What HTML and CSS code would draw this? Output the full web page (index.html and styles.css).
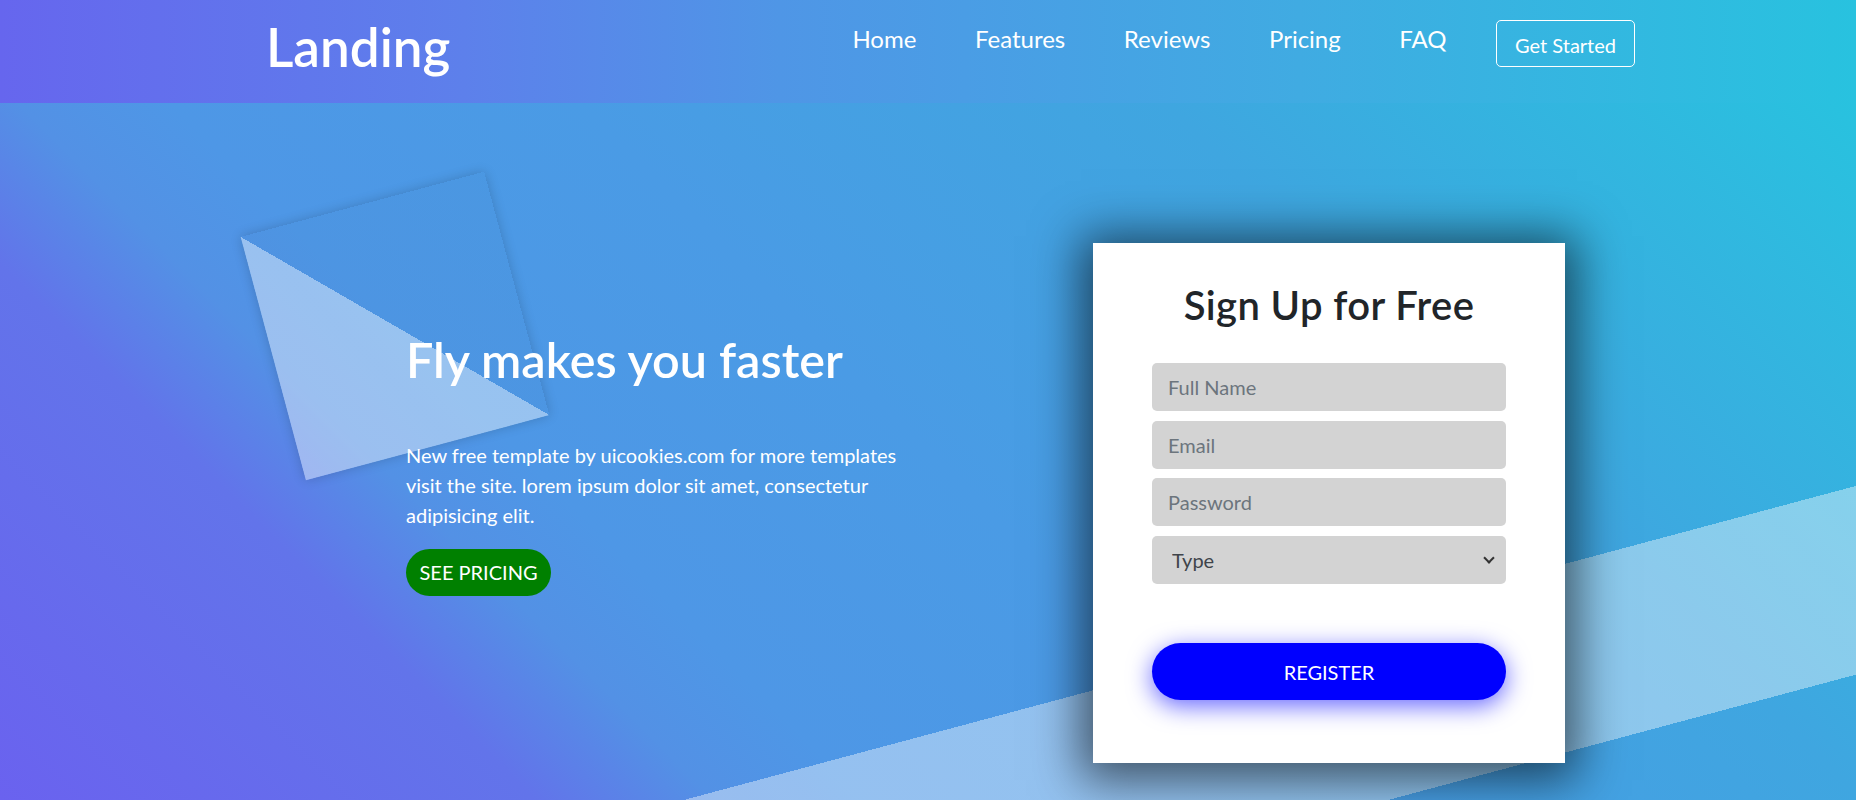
FILE: index.html
```html
<!DOCTYPE html>
<html lang="en">
<head>
<meta charset="utf-8">
<title>Landing</title>
<link rel="stylesheet" href="styles.css">
</head>
<body>
<header class="nav">
  <a class="brand" href="#">Landing</a>
  <ul class="menu">
    <li><a href="#">Home</a></li>
    <li><a href="#">Features</a></li>
    <li><a href="#">Reviews</a></li>
    <li><a href="#">Pricing</a></li>
    <li><a href="#">FAQ</a></li>
  </ul>
  <a class="btn-outline" href="#">Get Started</a>
</header>
<section class="hero">
  <div class="hero-text">
    <div class="tilt"></div>
    <h1>Fly makes you faster</h1>
    <p>New free template by uicookies.com for more templates visit the site. lorem ipsum dolor sit amet, consectetur adipisicing elit.</p>
    <a class="btn-pricing" href="#">SEE PRICING</a>
  </div>
  <form class="signup">
    <h2>Sign Up for Free</h2>
    <div class="fields">
      <input type="text" placeholder="Full Name">
      <input type="email" placeholder="Email">
      <input type="password" placeholder="Password">
      <div class="select-wrap">
        <select>
          <option>Type</option>
          <option>Personal</option>
          <option>Business</option>
        </select>
      </div>
    </div>
    <button type="button" class="btn-register">REGISTER</button>
  </form>
</section>
</body>
</html>
```

FILE: styles.css
```css
* {
  box-sizing: border-box;
}

html, body {
  margin: 0;
  height: 800px;
  overflow: hidden;
}

body {
  font-family: "Lato", "Open Sans", sans-serif;
  color: #fff;
  background: #4a9ae5;
}

a {
  color: #fff;
  text-decoration: none;
}

/* ---------- navbar ---------- */
.nav {
  height: 103px;
  display: flex;
  align-items: flex-start;
  padding: 0 221px 0 266px;
  background: linear-gradient(90deg, #6666ee 0%, #5d80eb 25%, #4f96e6 42%, #4a9de5 52%, #40abe2 70%, #28c2df 100%);
}

.brand {
  font-size: 53px;
  line-height: 53px;
  font-weight: 600;
  margin-top: 20px;
}

.menu {
  list-style: none;
  display: flex;
  margin: 27px 0 0 auto;
  padding: 0;
}

.menu a {
  display: block;
  font-size: 24px;
  line-height: 24px;
  padding: 0 29.3px;
}

.menu li:last-child a {
  padding-right: 30.5px;
}

.btn-outline {
  margin: 20px 0 0 19px;
  height: 47px;
  padding: 3px 18px 0;
  display: flex;
  align-items: center;
  border: 1px solid #fff;
  border-radius: 5px;
  font-size: 20px;
}

/* ---------- hero ---------- */
.hero {
  height: 697px;
  display: flex;
  align-items: flex-start;
  padding: 140px 0 0 406px;
  background:
    linear-gradient(165deg, transparent 73.7%, rgba(255, 255, 255, 0.4) 73.7%, rgba(255, 255, 255, 0.4) 89.5%, transparent 89.5%),
    linear-gradient(45deg, #6a62ef 0%, #6274ea 21%, #5391e5 28%, #4e97e6 34%, #4a9be5 50%, #3fa6e0 73%, #28c2df 100%);
}

.hero-text {
  position: relative;
  z-index: 0;
  width: 687px;
  flex: none;
}

.tilt {
  position: absolute;
  z-index: -1;
  left: -137px;
  top: -43px;
  width: 252px;
  height: 252px;
  transform: rotate(-15deg);
  background: linear-gradient(to top right, rgba(255, 255, 255, 0.42) 50%, rgba(0, 0, 0, 0.015) 50%);
  box-shadow: 0 0 12px rgba(0, 0, 0, 0.18);
}

.hero-text h1 {
  margin: 88px 0 0;
  font-size: 48.5px;
  line-height: 57.6px;
  font-weight: 600;
}

.hero-text p {
  margin: 51px 0 0;
  width: 500px;
  font-size: 20px;
  line-height: 30px;
}

.btn-pricing {
  display: inline-flex;
  align-items: center;
  margin-top: 19px;
  height: 47px;
  padding: 0 13.5px;
  border-radius: 24px;
  background: #008000;
  font-size: 20px;
}

/* ---------- sign-up card ---------- */
.signup {
  width: 472px;
  height: 520px;
  flex: none;
  padding: 37.5px 59px 0;
  background: #fff;
  box-shadow: 0 5px 45px 12px rgba(0, 0, 0, 0.58);
}

.signup h2 {
  margin: 0;
  text-align: center;
  color: #212529;
  font-size: 40px;
  line-height: 48px;
  font-weight: 600;
  letter-spacing: 0.4px;
}

.fields {
  margin-top: 34.5px;
  display: flex;
  flex-direction: column;
  gap: 9.5px;
}

.fields input,
.fields select {
  width: 100%;
  height: 48px;
  border: none;
  border-radius: 5px;
  background: #d3d3d3;
  padding: 0 16px;
  font-family: inherit;
  font-size: 20px;
  color: #495057;
  outline: none;
}

.fields input::placeholder {
  color: #6c757d;
}

.select-wrap {
  position: relative;
}

.fields select {
  appearance: none;
  -webkit-appearance: none;
  padding-left: 20px;
  color: #3f444a;
}

.select-wrap::after {
  content: "";
  position: absolute;
  right: 13px;
  top: 18px;
  width: 6px;
  height: 6px;
  border-right: 2px solid #333;
  border-bottom: 2px solid #333;
  transform: rotate(45deg);
  pointer-events: none;
}

.btn-register {
  display: block;
  width: 100%;
  height: 57px;
  margin-top: 59.5px;
  border: none;
  border-radius: 29px;
  background: #0000ff;
  color: #fff;
  font-family: inherit;
  font-size: 20px;
  box-shadow: 0 6px 24px rgba(0, 0, 255, 0.6);
}
```
